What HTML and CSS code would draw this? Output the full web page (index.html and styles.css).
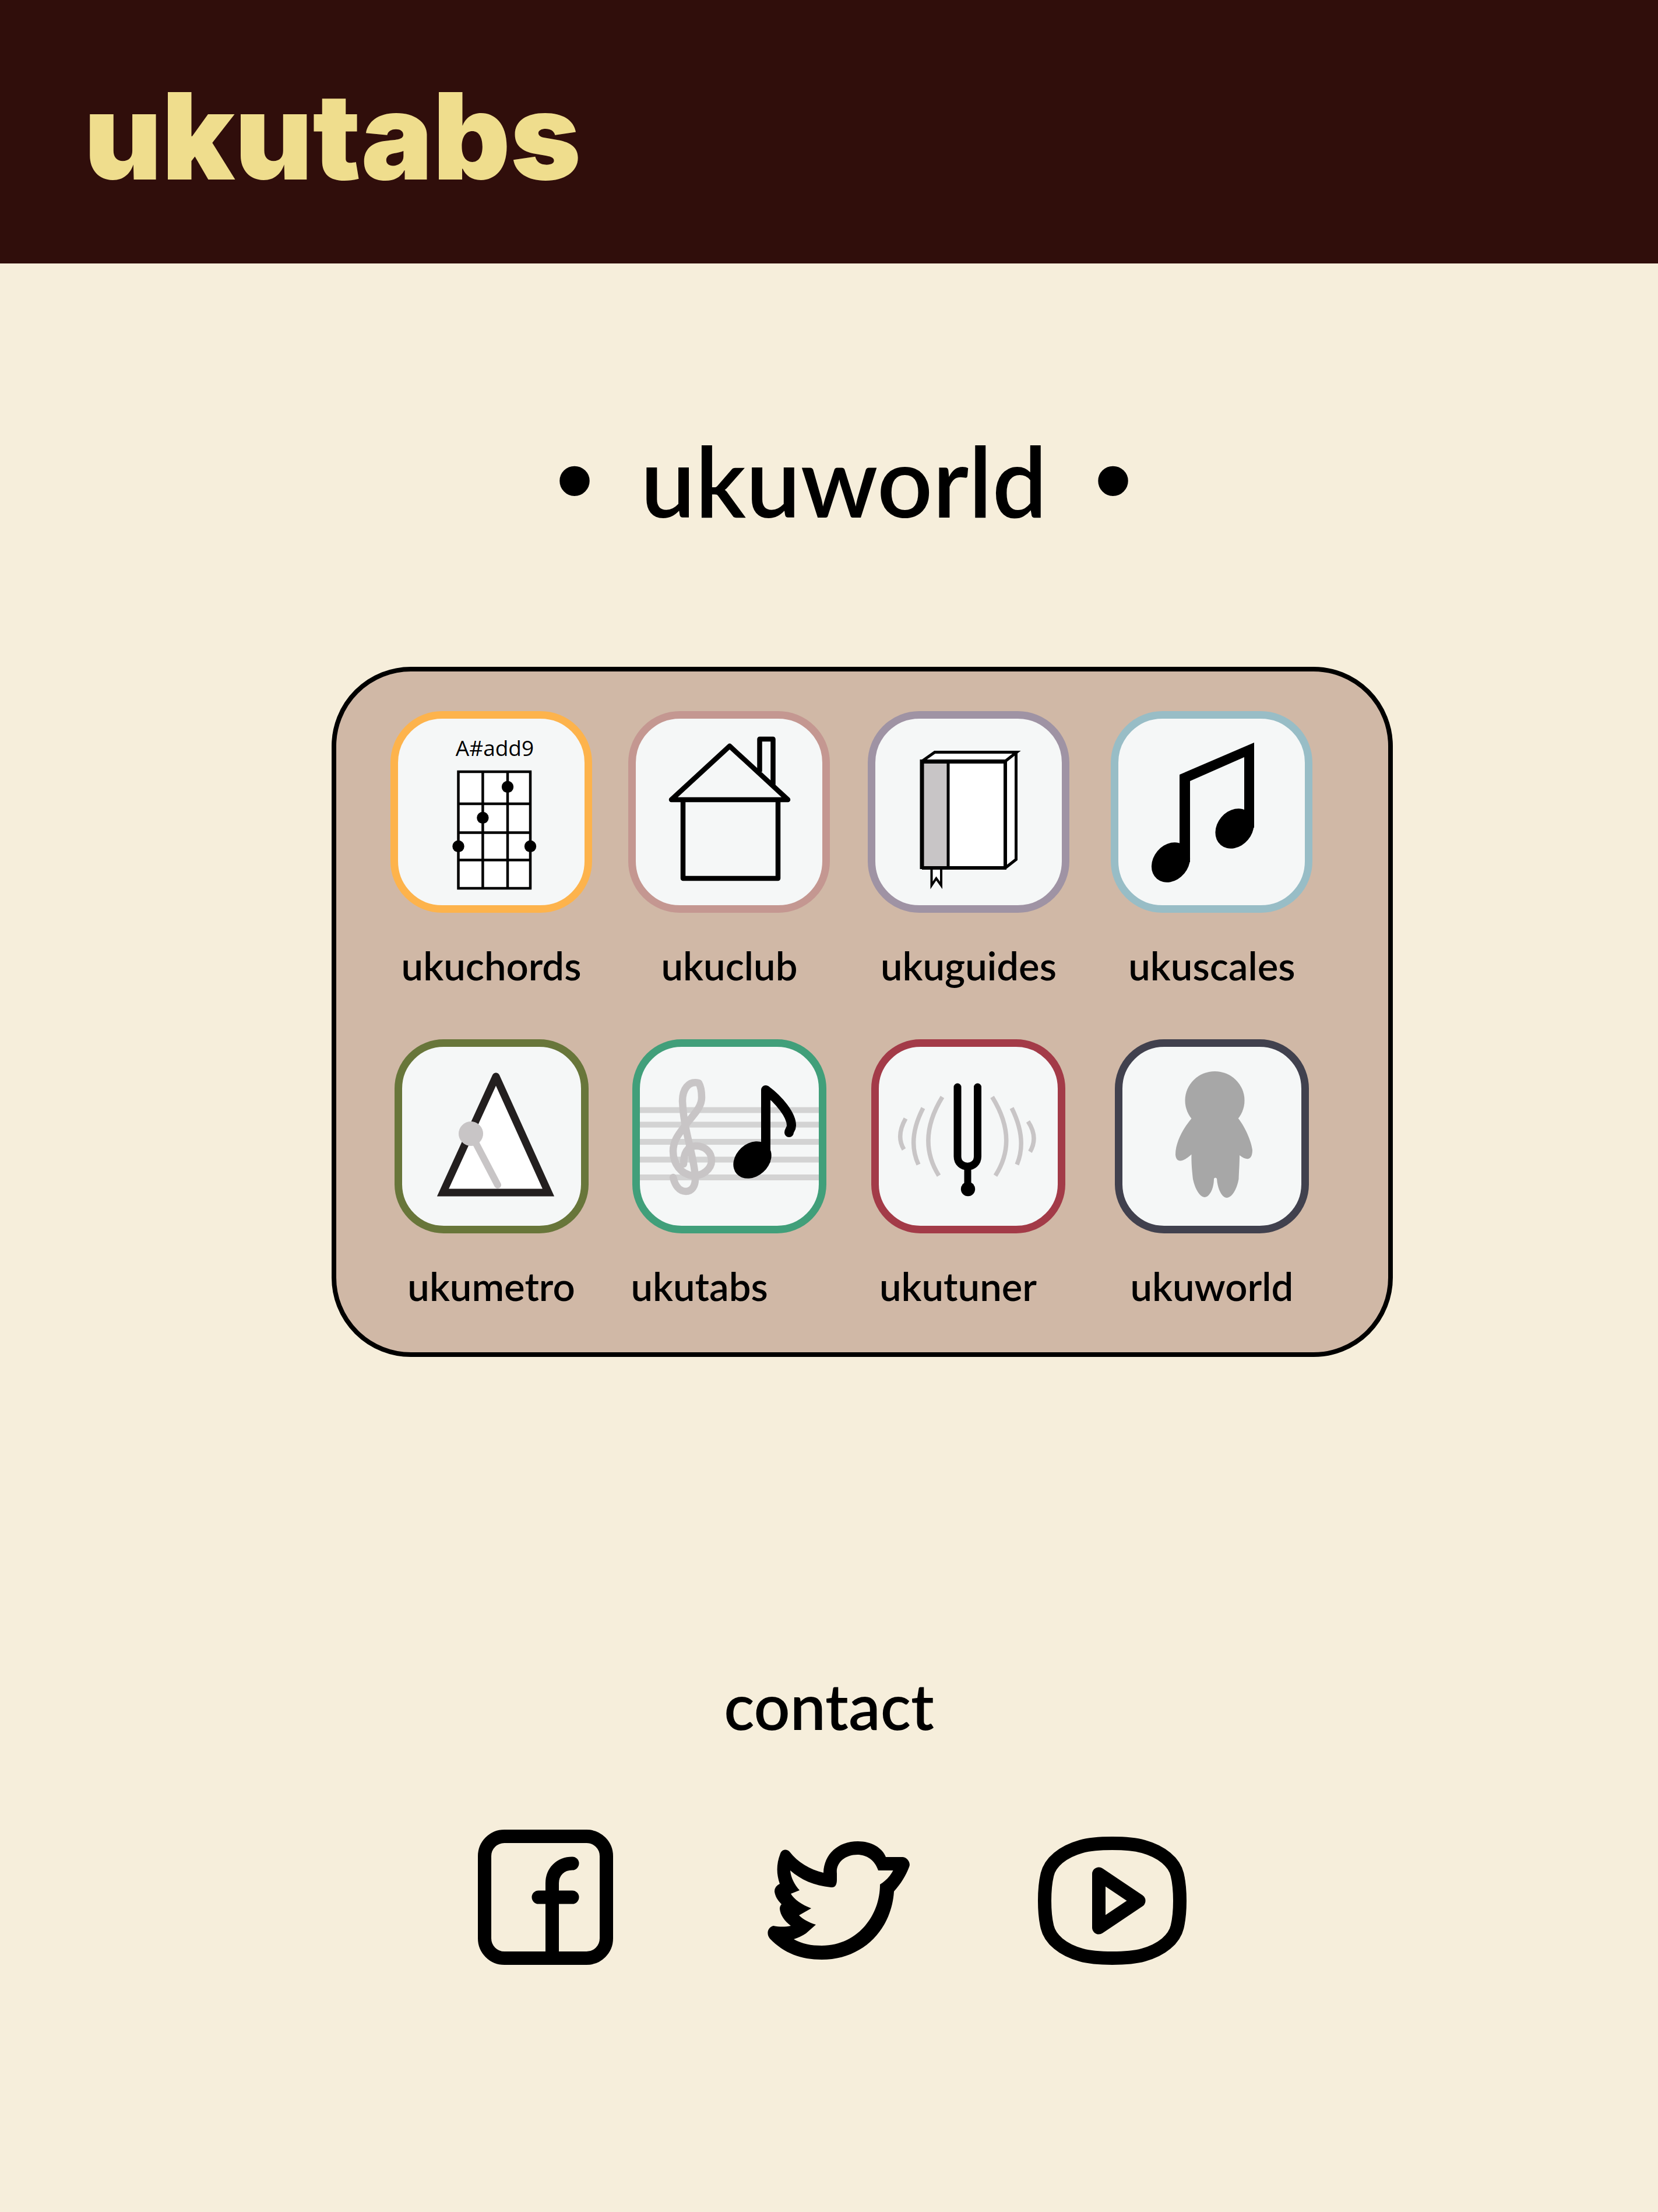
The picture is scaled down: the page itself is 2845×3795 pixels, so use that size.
FILE: index.html
```html
<!DOCTYPE html>
<html lang="en">
<head>
<meta charset="utf-8">
<meta name="viewport" content="width=device-width, initial-scale=1">
<title>ukutabs</title>
<link rel="stylesheet" href="styles.css">
</head>
<body>
<header class="site-header">
  <a class="logo" href="#">ukutabs</a>
</header>

<main>
  <h1 class="title"><span class="bullet">•</span><span>ukuworld</span><span class="bullet">•</span></h1>

  <nav class="apps" aria-label="uku apps">
    <a class="app" href="#">
      <svg class="tile" viewBox="0 0 346 346" aria-hidden="true">
        <rect class="frame orange" x="6.5" y="6.5" width="333" height="333" rx="82"/>
        <text class="chord-name" x="179" y="77" text-anchor="middle">A#add9</text>
        <rect x="116.5" y="104" width="123.500" height="200" fill="#fff"/>
        <path class="ink" stroke-width="4.500" d="M116.500 104V304M158.400 104V304M201 104V304M240 104V304M114.300 104H242.200M116.500 159H240M116.500 208.500H240M116.500 255.500H240M114.300 304H242.200"/>
        <circle cx="201" cy="130" r="10.200"/><circle cx="158.400" cy="183" r="10.200"/><circle cx="116.500" cy="232" r="10.200"/><circle cx="240" cy="232" r="10.200"/>
      </svg>
      <span class="label">ukuchords</span>
    </a>
    <a class="app" href="#">
      <svg class="tile" viewBox="0 0 346 346" aria-hidden="true">
        <rect class="frame pink" x="6.5" y="6.5" width="333" height="333" rx="82"/>
        <path class="ink" stroke-width="8.500" stroke-linejoin="round" d="M174 60L74 152H274Z M94 152V287H257V152 M225.500 104V48H248.500V128"/>
      </svg>
      <span class="label">ukuclub</span>
    </a>
    <a class="app" href="#">
      <svg class="tile" viewBox="0 0 346 346" aria-hidden="true">
        <rect class="frame purple" x="6.5" y="6.5" width="333" height="333" rx="82"/>
        <path d="M93 86L115 70H256V254L236 269H93Z" fill="#fff"/>
        <rect x="93" y="86" width="45" height="183" fill="#c8c5c6"/>
        <path d="M109.500 270V299L117.500 287L126 299V270Z" fill="#fff" stroke="#000" stroke-width="4"/>
        <path class="ink" stroke-width="5" d="M138 86V269M93 86L115 70.500H255.500L236 86M254.500 71V254.500L236 269"/>
        <path class="ink" stroke-width="6" d="M236 86V270M93 269H238"/>
        <path class="ink" stroke-width="7" d="M93 271V83M90 86.500H238"/>
      </svg>
      <span class="label">ukuguides</span>
    </a>
    <a class="app" href="#">
      <svg class="tile" viewBox="0 0 346 346" aria-hidden="true">
        <rect class="frame blue" x="6.5" y="6.5" width="333" height="333" rx="82"/>
        <path d="M118 109L246 54V200H229V79L136 120V259H118Z"/>
        <ellipse cx="103" cy="259.500" rx="37" ry="30" transform="rotate(-50 103 259.500)"/>
        <ellipse cx="212.500" cy="201.500" rx="37" ry="30" transform="rotate(-50 212.500 201.500)"/>
      </svg>
      <span class="label">ukuscales</span>
    </a>
    <a class="app" href="#">
      <svg class="tile small" viewBox="0 0 333 333" aria-hidden="true">
        <rect class="frame green" x="6.5" y="6.5" width="320" height="320" rx="78"/>
        <path d="M174 64L83 263H264L174 64" fill="#fff" stroke="#231f1f" stroke-width="13" stroke-linecap="round"/>
        <g fill="#c8c5c6" stroke="#c8c5c6"><circle cx="131" cy="162" r="20.500"/><path d="M131 162L177 250" stroke-width="12" stroke-linecap="round"/></g>
      </svg>
      <span class="label">ukumetro</span>
    </a>
    <a class="app app-tabs" href="#">
      <svg class="tile small" viewBox="0 0 333 333" aria-hidden="true">
        <rect class="frame teal" x="6.5" y="6.5" width="320" height="320" rx="78"/>
        <path d="M13 121.500H320M13 146.500H320M13 176H320M13 206.500H320M13 237H320" stroke="#d3d3d3" stroke-width="10"/>
        <path d="M88 214C88 196 94 183 109 183C125 183 136 194 136 208C136 223 120 235 104 234C84 232 70 214 70 192C70 172 82 160 93 145C105 129 119 117 119 100C119 88 117 80 114 75C96 71 86 86 86 106C88 142 93 158 101 194C106 216 108 228 108 240C108 252 102 261 92 261C80 261 73 250 70 237" fill="none" stroke="#c8c5c6" stroke-width="12.500" stroke-linecap="round" stroke-linejoin="round"/>
        <path d="M229 208V87C252 104 273 130 273 148C273 154 269 156 269 160" class="ink" stroke-width="16" stroke-linecap="round" stroke-linejoin="round"/>
        <ellipse cx="206" cy="207" rx="36" ry="28" transform="rotate(-42 206 207)"/>
      </svg>
      <span class="label">ukutabs</span>
    </a>
    <a class="app app-tuner" href="#">
      <svg class="tile small" viewBox="0 0 333 333" aria-hidden="true">
        <rect class="frame red" x="6.5" y="6.5" width="320" height="320" rx="78"/>
        <path d="M122 99Q77 172 116 234M89 118Q61 172 81 215M59 136Q42 166 56 189M207.500 99Q253 172 213 234M241 118Q268 172 250 215M269 141Q287 168 272.500 193" fill="none" stroke="#c8c5c6" stroke-width="7.500"/>
        <path d="M148 82V201C148 224 182.500 224 182.500 201V82" class="ink" stroke-width="13" stroke-linecap="round"/>
        <path d="M165.500 216V257" class="ink" stroke-width="12"/><circle cx="166" cy="257" r="12.200"/>
      </svg>
      <span class="label">ukutuner</span>
    </a>
    <a class="app" href="#">
      <svg class="tile small" viewBox="0 0 333 333" aria-hidden="true">
        <rect class="frame navy" x="6.5" y="6.5" width="320" height="320" rx="78"/>
        <g fill="#a7a7a7"><ellipse cx="171.500" cy="105" rx="51" ry="50"/>
        <path d="M131.500 136C118 152 104 176 104 198C105 211 115 213 131.500 197.500C131 215 133 230 134 240C138 259 147 271 154 271C162 271 170 257 170 239Q172.500 236 175 239C176 257 184 272 192 272C200 272 209 259 212.500 240C213 226 214 214 214 199C228 210 236 206 236 190C234 174 223 150 212 136Z"/></g>
      </svg>
      <span class="label">ukuworld</span>
    </a>
  </nav>
</main>

<footer class="contact">
  <h2 class="contact-title">contact</h2>
  <div class="social">
    <a href="#" aria-label="Facebook">
      <svg width="232" height="232" viewBox="0 0 232 232"><g class="ink" stroke-width="23"><rect x="11.500" y="11.500" width="209" height="209" rx="34"/><path stroke-linecap="round" d="M127.500 214V92C127.500 72 142 58 162 58M104 116H162"/></g></svg>
    </a>
    <a href="#" aria-label="Twitter">
      <svg width="244" height="212" viewBox="0 0 244 212"><path fill-rule="evenodd" d="M22 21C25 13 34 13 38 18C52 36 72 48 96 54C97 22 121 0 155 0C178 0 197 11 203 27H232C241 28 246 38 243 44C238 58 228 74 217 86C213 150 165 203 93 203C58 203 28 192 4 167C-3 158 1 147 10 145C21 147 30 147 40 145C29 137 22 126 21 116Q21 111 24 108C17 101 13 94 12 86Q12 77 21 73C15 56 15 39 22 21ZM39 50C40 62 46 74 55 84L40 90C46 100 59 109 75 115L54 127C60 133 70 139 83 143L66 158Q57 164 45 168C59 176 75 179 93 179C152 179 193 130 193 74C203 68 211 59 215.500 50H190C184 32 170 23 154 23C133 23 117 37 119 55V66C119 73 117 80 109 79C80 76 57 66 39 50Z"/></svg>
    </a>
    <a href="#" aria-label="YouTube">
      <svg width="255" height="220" viewBox="0 0 255 220"><g class="ink" stroke-width="23" stroke-linejoin="round"><path d="M127.500 11.500C102 11.500 88 13 74 17C42 26 21 44 16 65C10 90 10 130 16 155C21 176 42 194 74 203C88 207 102 208.500 127.500 208.500C153 208.500 167 207 181 203C213 194 234 176 239 155C245 130 245 90 239 65C234 44 213 26 181 17C167 13 153 11.500 127.500 11.500Z"/><path d="M104.500 64V156L173 110Z"/></g></svg>
    </a>
  </div>
</footer>
</body>
</html>
```
FILE: styles.css
```css
* { box-sizing: border-box; }

body {
  margin: 0;
  background: #f6eedb;
  color: #000;
  font-family: Lato, "Noto Sans", sans-serif;
  font-weight: 600;
}

a { color: inherit; text-decoration: none; }
svg { display: block; }

.site-header {
  background: #300e0b;
  padding: 14px 144px 0;
}
.logo {
  display: block;
  font: 900 206px/438px Inter, sans-serif;
  color: #efdd8d;
}

.title {
  display: flex;
  justify-content: center;
  align-items: baseline;
  gap: 80px;
  margin: 270px 0 220px;
  padding-left: 51px;
  font-size: 167px;
  font-weight: 600;
  line-height: 200px;
}
.bullet {
  font-family: "Liberation Sans", sans-serif;
  font-size: 190px;
  font-weight: 400;
}

.apps {
  display: grid;
  grid-template-columns: 408fr 410fr 417fr 346fr;
  row-gap: 87px;
  width: 64%;
  margin-left: 20%;
  padding: 68px 129px 74px 93px;
  border: 8px solid #000;
  border-radius: 136px;
  background: #d0b8a6;
}
.app {
  display: flex;
  flex-direction: column;
  align-items: center;
  gap: 50px;
  width: 346px;
}
.tile { width: 346px; height: 346px; }
.tile.small { width: 333px; height: 333px; }
.label { font-size: 67px; line-height: 80px; }
.app-tabs .label { align-self: flex-start; padding-left: 4px; }
.app-tuner .label { align-self: flex-start; padding-left: 20px; }

.ink { fill: none; stroke: #000; }
.frame { fill: #f5f7f7; stroke-width: 13px; }
.orange { stroke: #fdb34c; }
.pink { stroke: #c49791; }
.purple { stroke: #9f93a4; }
.blue { stroke: #98bdc6; }
.green { stroke: #68763a; }
.teal { stroke: #419f7a; }
.red { stroke: #a33b48; }
.navy { stroke: #41414e; }
.chord-name {
  font-family: "Open Sans", sans-serif;
  font-size: 37px;
  font-weight: 400;
}

.contact {
  display: flex;
  flex-direction: column;
  align-items: center;
  padding: 533px 0 420px;
}
.contact-title {
  margin: 0 0 148px;
  font-size: 109px;
  font-weight: 600;
  line-height: 130px;
}
.social {
  display: grid;
  grid-template-columns: 497px 464px 255px;
  align-items: end;
  padding-left: 11px;
}
```
